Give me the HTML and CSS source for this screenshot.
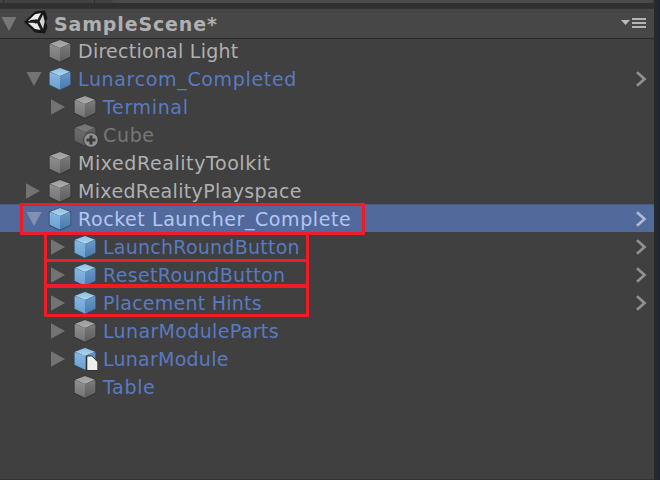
FILE: index.html
```
<!DOCTYPE html>
<html lang="en">
<head>
<meta charset="utf-8">
<title>Hierarchy</title>
<link rel="stylesheet" href="styles.css">
</head>
<body>
<svg class="defs" width="0" height="0">
  <defs>
    <linearGradient id="gTop" x1="0" y1="0" x2="0" y2="1"><stop offset="0" stop-color="#9c9c9c"/><stop offset="1" stop-color="#acacac"/></linearGradient>
    <linearGradient id="gLeft" x1="0" y1="0" x2="0" y2="1"><stop offset="0" stop-color="#909090"/><stop offset="1" stop-color="#747474"/></linearGradient>
    <linearGradient id="gRight" x1="0" y1="0" x2="0" y2="1"><stop offset="0" stop-color="#7c7c7c"/><stop offset="1" stop-color="#5c5c5c"/></linearGradient>
    <linearGradient id="bTop" x1="0" y1="0" x2="0" y2="1"><stop offset="0" stop-color="#8fc0e4"/><stop offset="1" stop-color="#b0d4ee"/></linearGradient>
    <linearGradient id="bLeft" x1="0" y1="0" x2="0" y2="1"><stop offset="0" stop-color="#88b8e2"/><stop offset="1" stop-color="#699fcf"/></linearGradient>
    <linearGradient id="bRight" x1="0" y1="0" x2="0" y2="1"><stop offset="0" stop-color="#6799c9"/><stop offset="1" stop-color="#477bac"/></linearGradient>
    <symbol id="cube" viewBox="0 0 24 24">
      <path d="M12 .8 22.800 4.600V18.300L12 23.400 1.200 18.300V4.600Z" fill="#343434" stroke="#343434" stroke-width=".7" stroke-linejoin="round"/>
      <path d="M12 1 22 4.8 12 9 2 4.8Z" fill="url(#gTop)"/><path d="M1.6 5 12 9V22.8L1.6 17.8Z" fill="url(#gLeft)"/><path d="M22.4 5 12 9V22.8L22.4 17.8Z" fill="url(#gRight)"/>
    </symbol>
    <symbol id="prefab" viewBox="0 0 24 24">
      <path d="M12 .8 22.800 4.600V18.300L12 23.400 1.200 18.300V4.600Z" fill="#34485c" stroke="#34485c" stroke-width=".7" stroke-linejoin="round"/>
      <path d="M12 1 22 4.8 12 9 2 4.8Z" fill="url(#bTop)"/><path d="M1.6 5 12 9V22.8L1.6 17.8Z" fill="url(#bLeft)"/><path d="M22.4 5 12 9V22.8L22.4 17.8Z" fill="url(#bRight)"/>
    </symbol>
    <symbol id="down" viewBox="0 0 16 14"><path d="M.5 0H15.5L8 14Z" fill="currentColor"/></symbol>
    <symbol id="right" viewBox="0 0 14 16"><path d="M0 .3 14 8 0 15.7Z" fill="currentColor"/></symbol>
    <symbol id="chev" viewBox="0 0 12 16"><path d="M2 1.3 9.500 8 2 14.7" fill="none" stroke="currentColor" stroke-width="2.7"/></symbol>
  </defs>
</svg>
<div class="panel">
  <div class="toolbar"><span class="tab"></span><span class="tab wide"></span><span class="search"></span></div>
  <div class="header">
    <svg class="fold" width="16" height="14"><use href="#down"/></svg>
    <svg class="logo" width="26" height="26" viewBox="0 0 26 26">
      <path d="M1 13 12 2.500 22 1.500 24.500 9 23 13 24.500 18 22 24.500 12 23.500Z" fill="#171717"/>
      <path d="M5 12 12 5.200 18 4 14.500 10.800H8.500L6 12Z" fill="#eee"/>
      <path d="M5 13.800H14L17.500 21 12 20Z" fill="#e8e8e8"/>
      <path d="M20 5.500 21.700 12.500 20 20 16.500 12.500Z" fill="#d2d2d2"/>
      <path d="M9.500 12.300 13 10 14.800 12.300 13 15Z" fill="#202020"/>
      <path d="M8 12.500H15.500M15.500 12.500 19 5M15.500 12.500 19 20" stroke="#202020" stroke-width="1.500"/>
    </svg>
    <span class="title">SampleScene*</span>
    <svg class="menu" width="26" height="10" viewBox="0 0 26 10"><path d="M0 2H9L4.500 7Z" fill="#bababa"/><path d="M11 1H25M11 5H25M11 9H25" stroke="#b5b5b5" stroke-width="2"/></svg>
  </div>
  <div class="tree">
    <div class="row l0"><span class="arrow"></span><svg class="icon" width="24" height="24"><use href="#cube"/></svg><span class="label tight">Directional Light</span></div>
    <div class="row l0 link"><span class="arrow"><svg width="16" height="14"><use href="#down"/></svg></span><svg class="icon" width="24" height="24"><use href="#prefab"/></svg><span class="label loose">Lunarcom_Completed</span><svg class="chev" width="12" height="16"><use href="#chev"/></svg></div>
    <div class="row l1 link"><span class="arrow"><svg width="14" height="16"><use href="#right"/></svg></span><svg class="icon" width="24" height="24"><use href="#cube"/></svg><span class="label wide">Terminal</span></div>
    <div class="row l1 off"><span class="arrow"></span><svg class="icon" width="26" height="24"><use href="#cube" width="24" height="24" opacity=".55"/><circle cx="18" cy="17" r="7.300" fill="#929292" stroke="#3b3b3b"/><path d="M18 12.500V21.500M13.500 17H22.500" stroke="#393939" stroke-width="3"/></svg><span class="label wide">Cube</span></div>
    <div class="row l0"><span class="arrow"></span><svg class="icon" width="24" height="24"><use href="#cube"/></svg><span class="label roomy">MixedRealityToolkit</span></div>
    <div class="row l0"><span class="arrow"><svg width="14" height="16"><use href="#right"/></svg></span><svg class="icon" width="24" height="24"><use href="#cube"/></svg><span class="label">MixedRealityPlayspace</span></div>
    <div class="row l0 selected"><span class="arrow"><svg width="16" height="14"><use href="#down"/></svg></span><svg class="icon" width="24" height="24"><use href="#prefab"/></svg><span class="label roomy">Rocket Launcher_Complete</span><svg class="chev" width="12" height="16"><use href="#chev"/></svg></div>
    <div class="row l1 link"><span class="arrow"><svg width="14" height="16"><use href="#right"/></svg></span><svg class="icon" width="24" height="24"><use href="#prefab"/></svg><span class="label tight">LaunchRoundButton</span><svg class="chev" width="12" height="16"><use href="#chev"/></svg></div>
    <div class="row l1 link"><span class="arrow"><svg width="14" height="16"><use href="#right"/></svg></span><svg class="icon" width="24" height="24"><use href="#prefab"/></svg><span class="label">ResetRoundButton</span><svg class="chev" width="12" height="16"><use href="#chev"/></svg></div>
    <div class="row l1 link"><span class="arrow"><svg width="14" height="16"><use href="#right"/></svg></span><svg class="icon" width="24" height="24"><use href="#prefab"/></svg><span class="label tight">Placement Hints</span><svg class="chev" width="12" height="16"><use href="#chev"/></svg></div>
    <div class="row l1 link"><span class="arrow"><svg width="14" height="16"><use href="#right"/></svg></span><svg class="icon" width="24" height="24"><use href="#cube"/></svg><span class="label">LunarModuleParts</span></div>
    <div class="row l1 link"><span class="arrow"><svg width="14" height="16"><use href="#right"/></svg></span><svg class="icon" width="26" height="24"><use href="#prefab" width="24" height="24"/><path d="M13 8.500H19L25 14.500V24H13Z" fill="#333"/><path d="M14.300 9.500H19L24.300 15V23H14.300Z" fill="#eeeeea"/></svg><span class="label tight">LunarModule</span></div>
    <div class="row l1 link"><span class="arrow"></span><svg class="icon" width="24" height="24"><use href="#cube"/></svg><span class="label wide">Table</span></div>
  </div>
</div>
<div class="mark m1"></div><div class="mark m2"></div><div class="mark m3"></div><div class="mark m4"></div>
</body>
</html>
```
FILE: styles.css
```
* { box-sizing: border-box; }
body { margin: 0; width: 660px; height: 480px; overflow: hidden; position: relative; background: linear-gradient(90deg, #292929 0 656px, #20272f 658px, #14263b 660px); font-family: "DejaVu Sans", sans-serif; }
svg { display: block; flex: none; }
.defs { position: absolute; }
.panel { width: 654px; height: 480px; background: #404040; border-bottom: 1px solid #343434; }
.toolbar { height: 8px; background: #424242; box-shadow: inset 0 -5px #303030; display: flex; }
.tab { width: 4px; height: 5px; border-right: 1px solid #303030; }
.tab.wide { width: 91px; }
.search { width: 540px; height: 3px; margin-left: 17px; background: #4a4a4a; border-radius: 0 0 8px 8px; }
.header { height: 31px; background: #474747; border-top: 1px solid #333; border-bottom: 1px solid #292929; display: flex; align-items: center; }
.fold { margin-left: 1px; color: #777; }
.logo { margin: -3px 0 0 6px; }
.title { margin-left: 5px; font-size: 19px; font-weight: 700; line-height: 28px; color: #b0b0b0; white-space: nowrap; letter-spacing: .85px; }
.menu { margin: -1px 7px 0 auto; }
.tree { margin-top: -3px; }
.row { height: 28px; padding: 2px 7px 0 25px; display: flex; align-items: center; color: #b0b0b0; }
.row.l1 { padding-left: 49px; }
.arrow { width: 24px; padding-left: 1px; color: #737373; }
.l0 .arrow { width: 23px; }
.l1 .arrow { padding-left: 2px; }
.label { margin-left: 6px; padding-top: 1px; font-size: 19px; line-height: 25px; letter-spacing: .35px; white-space: nowrap; }
.label.tight { letter-spacing: .25px; }
.label.roomy { letter-spacing: .58px; }
.label.loose, .label.wide { letter-spacing: .66px; }
.icon { margin-top: -1px; overflow: visible; }
.icon[width="26"] { margin-right: -2px; }
.link { color: #5a7ac0; }
.off { color: #777; }
.selected { background: #526a9b; color: #b3c6f4; box-shadow: inset 0 1px #485e8a; }
.selected .arrow { color: #8290af; }
.chev { margin-left: auto; color: #909090; }
.selected .chev { color: #b0b9ce; }
.mark { position: absolute; border: 3px solid #ee1c25; }
.m1 { left: 20px; top: 203px; width: 345px; height: 32px; }
.m2 { left: 44px; top: 232px; width: 265px; height: 30px; }
.m3 { left: 44px; top: 259px; width: 265px; height: 28px; }
.m4 { left: 44px; top: 285px; width: 265px; height: 32px; }
```
